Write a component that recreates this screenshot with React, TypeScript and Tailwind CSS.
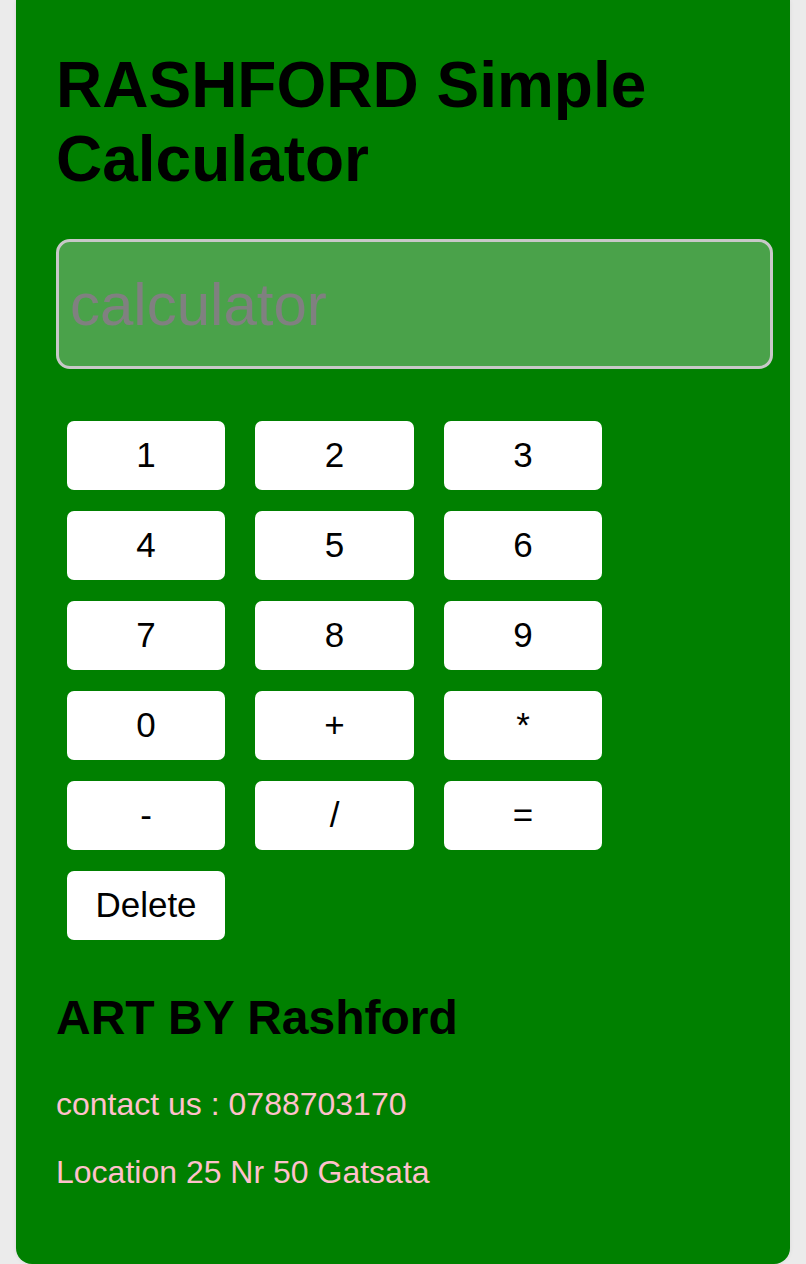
import React, { useState } from 'react';

const KEYS = ['1', '2', '3', '4', '5', '6', '7', '8', '9', '0', '+', '*', '-', '/', '=', 'Delete'];

export default function App() {
  const [value, setValue] = useState('');

  const press = (key: string) => {
    if (key === 'Delete') return setValue('');
    if (key === '=') {
      try {
        // eslint-disable-next-line no-new-func
        setValue(String(Function(`return (${value})`)()));
      } catch {
        setValue('Error');
      }
      return;
    }
    setValue(value + key);
  };

  return (
    <div className="min-h-[1264px] bg-[#ebebeb] px-4 font-['Liberation_Sans',Arial,sans-serif]">
      <div className="w-[774px] bg-[#008000] rounded-b-[16px] pl-10 pr-4 pt-[49px] pb-[73px] shadow-[0_0_4px_rgba(0,0,0,0.08)]">
        {/* Header */}
        <h1 className="text-[64px] leading-[1.15] font-bold text-black">RASHFORD Simple Calculator</h1>

        <input
          value={value}
          readOnly
          placeholder="calculator"
          className="mt-[43px] block w-[717px] h-[130px] rounded-[14px] border-[3px] border-[#c8c8c8] bg-[#4aa24a] px-[11px] text-[60px] text-black placeholder:text-[#808080] outline-none"
        />

        {/* Keypad */}
        <div className="mt-[52px] ml-[11px] grid grid-cols-[158px_159px_158px] gap-x-[30px] gap-y-[21px] w-fit">
          {KEYS.map(key => (
            <button
              key={key}
              onClick={() => press(key)}
              className="h-[69px] bg-white rounded-[7px] text-[35px] text-black"
            >
              {key}
            </button>
          ))}
        </div>

        {/* Footer */}
        <h2 className="mt-[50px] text-[48px] leading-[1.15] font-bold text-black">ART BY Rashford</h2>
        <p className="mt-[41px] text-[32px] leading-[1.15] text-[#ffc0cb]">contact us : 0788703170</p>
        <p className="mt-[31px] text-[32px] leading-[1.15] text-[#ffc0cb]">Location 25 Nr 50 Gatsata</p>
      </div>
    </div>
  );
}
